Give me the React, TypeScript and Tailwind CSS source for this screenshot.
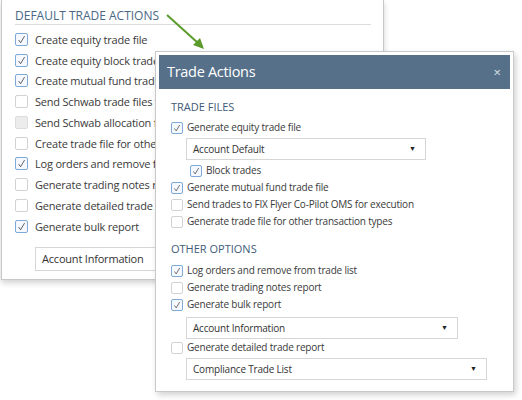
import React from 'react';

const font = { fontFamily: '"Open Sans", "Noto Sans", sans-serif' };

type Box = { checked?: boolean; disabled?: boolean; size: number };

const CheckBox = ({ checked, disabled, size }: Box) => (
  <span
    className={`shrink-0 flex items-center justify-center rounded-[2px] border ${
      checked
        ? 'border-[#7fa9d8] bg-[#f5f9fd]'
        : disabled
        ? 'border-[#dcdcdc] bg-[#ececec]'
        : 'border-[#d2d2d2] bg-white'
    }`}
    style={{ width: size, height: size }}
  >
    {checked && (
      <svg width={size - 4} height={size - 4} viewBox="0 0 10 10">
        <path d="M1.8 5.6 L4 8.6 L8.4 1.2" fill="none" stroke="#3d3d3d" strokeWidth="0.9" />
      </svg>
    )}
  </span>
);

const backRows = [
  { label: 'Create equity trade file', checked: true },
  { label: 'Create equity block trade file', checked: true },
  { label: 'Create mutual fund trade file', checked: true },
  { label: 'Send Schwab trade files to Schwab', checked: false },
  { label: 'Send Schwab allocation file', checked: false, disabled: true },
  { label: 'Create trade file for other transaction types', checked: false },
  { label: 'Log orders and remove from trade list', checked: true },
  { label: 'Generate trading notes report', checked: false },
  { label: 'Generate detailed trade report', checked: false },
  { label: 'Generate bulk report', checked: true },
];

const Row = ({ label, checked, className = '' }: { label: string; checked?: boolean; className?: string }) => (
  <div className={`flex items-center h-[17px] gap-[4px] ${className}`}>
    <CheckBox size={12} checked={checked} />
    <span className="text-[10px] leading-[13px] tracking-[-0.2px] text-[#3a3a3a] whitespace-nowrap">{label}</span>
  </div>
);

const Select = ({ value, width, className = '' }: { value: string; width: number; className?: string }) => (
  <div
    className={`ml-[15px] h-[22px] flex items-center justify-between border border-[#d6d6d6] bg-white pl-[6px] pr-[9px] ${className}`}
    style={{ width }}
  >
    <span className="text-[10px] leading-[13px] tracking-[-0.2px] text-[#333]">{value}</span>
    <span className="text-[7px] leading-[8px] text-[#222]">▼</span>
  </div>
);

export default function App() {
  return (
    <div className="relative w-[522px] h-[400px] bg-white overflow-hidden" style={font}>
      {/* back panel */}
      <div className="ml-px w-[383px] h-[280px] border-x border-b border-[#c8c8c8] bg-white shadow-[0_3px_6px_rgba(0,0,0,0.18)] pl-[13px] pr-[12px] pt-[8px]">
        <div className="h-[17px] border-b border-[#dcdcdc] text-[12px] leading-[16px] text-[#4a6785]">
          DEFAULT TRADE ACTIONS
        </div>
        <div className="mt-[4px] flex flex-col">
          {backRows.map((r) => (
            <div key={r.label} className="flex items-center h-[20.75px] gap-[7px]">
              <CheckBox size={13} checked={r.checked} disabled={r.disabled} />
              <span className="text-[11px] leading-[15px] tracking-[-0.2px] text-[#3a3a3a] whitespace-nowrap">{r.label}</span>
            </div>
          ))}
        </div>
        <div className="mt-[10px] ml-[20px] w-[300px] h-[24px] border border-[#d6d6d6] flex items-center pl-[6px] text-[11px] leading-[15px] tracking-[-0.2px] text-[#333]">
          Account Information
        </div>
      </div>

      {/* arrow */}
      <svg className="absolute left-0 top-0" width="522" height="400" viewBox="0 0 522 400">
        <line x1="167" y1="15" x2="198" y2="43" stroke="#5b9b2c" strokeWidth="2" />
        <polygon points="204,49 193,45 200,38" fill="#5b9b2c" />
      </svg>

      {/* modal */}
      <div className="absolute left-[155px] top-[51px] w-[359px] h-[341px] bg-white border border-[#c9c9c9] p-[3px] shadow-[2px_3px_6px_rgba(0,0,0,0.18)]">
        <div className="h-[34px] bg-[#56708a] flex items-center justify-between pl-[8px] pr-[9px]">
          <span className="text-[14.5px] leading-[20px] tracking-[-0.3px] text-white">Trade Actions</span>
          <span className="text-[13px] leading-none text-[#dbe3ea]">×</span>
        </div>
        <div className="pl-[12px] pt-[10px] flex flex-col">
          <div className="h-[16px] leading-[16px] text-[11px] text-[#3f5b78]">TRADE FILES</div>
          <Row className="mt-[4px]" label="Generate equity trade file" checked />
          <Select className="mt-[2px]" value="Account Default" width={240} />
          <Row className="mt-[2px] ml-[19px]" label="Block trades" checked />
          <Row label="Generate mutual fund trade file" checked />
          <Row label="Send trades to FIX Flyer Co-Pilot OMS for execution" />
          <Row label="Generate trade file for other transaction types" />
          <div className="mt-[11px] h-[16px] leading-[16px] text-[11px] text-[#3f5b78]">OTHER OPTIONS</div>
          <Row className="mt-[5px]" label="Log orders and remove from trade list" checked />
          <Row label="Generate trading notes report" />
          <Row label="Generate bulk report" checked />
          <Select className="mt-[4px]" value="Account Information" width={272} />
          <Row label="Generate detailed trade report" />
          <Select className="mt-[2px]" value="Compliance Trade List" width={301} />
        </div>
      </div>
    </div>
  );
}
